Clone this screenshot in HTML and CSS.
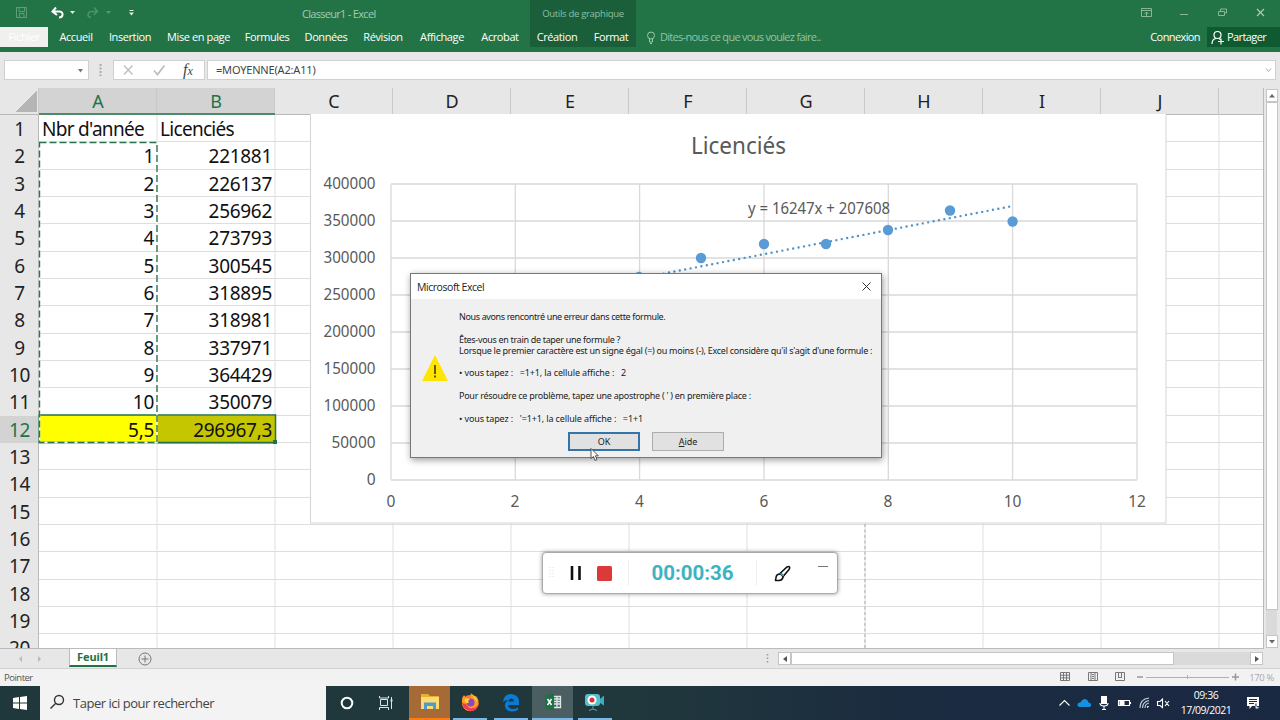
FILE: index.html
```html
<!DOCTYPE html>
<html lang="fr">
<head>
<meta charset="utf-8">
<title>Classeur1 - Excel</title>
<link rel="stylesheet" href="styles.css">
</head>
<body>
<div class="screen">
  <header class="ribbon">
    <div class="quick">
      <svg width="140" height="27" fill="none">
        <g stroke="#5f9c7a"><path d="M16.5 7.500h10v10h-10zM19 7.500v4h5.500v-4M19.500 17v-3.500h4.500v3.500"/></g>
        <path d="M56 7.500L52.500 11.500L57 15M53 11.500h6.500q3.500.5 3 3.500q-.5 2.500-3.500 2.500" stroke="#fff" stroke-width="2"/>
        <path d="M70 11h5l-2.500 3z" fill="#e2efe7"/>
        <g opacity=".35"><path d="M94 7.500l3.500 4-4 3.500M97.500 11.500H91q-3 .5-3 3.500 0 2 3 2.500" stroke="#9fc9af" stroke-width="1.600"/><path d="M106 11h5l-2.500 3z" fill="#c0d9ca"/></g>
        <path d="M129.500 10.500h4" stroke="#e2efe7"/><path d="M129 12.500h5l-2.500 3z" fill="#e2efe7"/>
      </svg>
    </div>
    <div class="doc-title">Classeur1 - Excel</div>
    <div class="context">
      <div class="context-title">Outils de graphique</div>
      <div class="context-tabs"><span>Création</span><span>Format</span></div>
    </div>
    <nav class="tabs">
      <span class="file">Fichier</span><span>Accueil</span><span>Insertion</span><span>Mise en page</span><span>Formules</span><span>Données</span><span>Révision</span><span>Affichage</span><span>Acrobat</span>
    </nav>
    <div class="tell">
      <svg width="10" height="13" fill="none" stroke="#9cc8ae"><circle cx="5" cy="4.500" r="3.500"/><path d="M3.500 7.500v3.500h3v-3.500M4 12.500h2"/></svg>
      <span>Dites-nous ce que vous voulez faire..</span>
    </div>
    <div class="window-buttons">
      <svg width="140" height="27" fill="none" stroke="#85b798">
        <path d="M.5 8.500h10v8h-10zM.5 10.500h10M5.500 16v-4M3.500 14l2-2 2 2"/>
        <path d="M39 14.500h8"/><path d="M77.500 11.500h6v4h-6zM79.500 11v-2h6v4h-2"/><path d="M116 9l7 7M123 9l-7 7" stroke="#a8cdb6" stroke-width="1.200"/>
      </svg>
    </div>
    <div class="account"><span class="login">Connexion</span>
      <span class="share"><svg width="14" height="15" fill="none" stroke="#fff" stroke-width="1.200"><circle cx="6.500" cy="5" r="3.500"/><path d="M1 14q0-5 4-5.500M8 8.500l1.500 1M7 11.500h6M10 8.500v6"/></svg><b>Partager</b></span>
    </div>
  </header>

  <section class="formula-bar">
    <div class="name-box"><svg width="6" height="4"><path d="M0 0h5l-2.500 3.500z" fill="#777"/></svg></div>
    <svg class="grip" width="3" height="12"><path d="M1.500 0v12" stroke="#aaa" stroke-width="2" stroke-dasharray="2 1.500"/></svg>
    <div class="fx-box">
      <svg width="90" height="18" fill="none" stroke="#bdbdbd" stroke-width="1.300"><path d="M10 4.500l8.500 9M18.500 4.500l-8.500 9"/><path d="M40 9.500l3.500 4 7-9" stroke-width="1.800"/></svg>
      <i class="fx">f<small>x</small></i>
    </div>
    <div class="formula"><span>=MOYENNE(A2:A11)</span><svg width="8" height="5" fill="none" stroke="#aaa"><path d="M1 .5l2.500 3 2.500-3"/></svg></div>
  </section>

  <main class="sheet">
    <div class="grid-area">
      <div class="col-heads">
        <span class="corner"></span><span class="sel">A</span><span class="sel">B</span><span>C</span><span>D</span><span>E</span><span>F</span><span>G</span><span>H</span><span>I</span><span>J</span><span></span>
      </div>
      <div class="rows">
        <div class="row"><b>1</b><span class="txt">Nbr d'année</span><span class="txt">Licenciés</span></div>
        <div class="row"><b>2</b><span>1</span><span>221881</span></div>
        <div class="row"><b>3</b><span>2</span><span>226137</span></div>
        <div class="row"><b>4</b><span>3</span><span>256962</span></div>
        <div class="row"><b>5</b><span>4</span><span>273793</span></div>
        <div class="row"><b>6</b><span>5</span><span>300545</span></div>
        <div class="row"><b>7</b><span>6</span><span>318895</span></div>
        <div class="row"><b>8</b><span>7</span><span>318981</span></div>
        <div class="row"><b>9</b><span>8</span><span>337971</span></div>
        <div class="row"><b>10</b><span>9</span><span>364429</span></div>
        <div class="row"><b>11</b><span>10</span><span>350079</span></div>
        <div class="row total"><b>12</b><span class="yellow">5,5</span><span class="olive">296967,3</span></div>
        <div class="row"><b>13</b></div>
        <div class="row"><b>14</b></div>
        <div class="row"><b>15</b></div>
        <div class="row"><b>16</b></div>
        <div class="row"><b>17</b></div>
        <div class="row"><b>18</b></div>
        <div class="row"><b>19</b></div>
        <div class="row"><b>20</b></div>
      </div>
      <svg class="marks" width="1263" height="561" fill="none">
        <path d="M39 26h236" stroke="#217346" stroke-width="1.600"/>
        <path d="M39 327h236.500v27.500H39z" stroke="#217346" stroke-width="1.500"/>
        <path d="M39.500 54.500H157V354.500H39.500z" stroke="#fff" stroke-width="1.500"/>
        <path d="M39.500 54.500H157V354.500H39.500z" stroke="#2b7550" stroke-width="1.400" stroke-dasharray="7 3"/>
        <path d="M273 352h4v4h-4z" fill="#217346"/>
        <path d="M865 436v125" stroke="#a9a9a9" stroke-dasharray="3 2.500"/>
      </svg>
      <svg class="chart" width="857" height="411" viewBox="310 114 857 411">
        <rect x="310.500" y="113.500" width="855.500" height="409.500" fill="#fff" stroke="#d4d4d4"/>
        <g stroke="#d9d9d9" stroke-width="1.300" fill="none">
          <path d="M391 184h746M391 221h746M391 258h746M391 295h746M391 332h746M391 369h746M391 406h746M391 443h746M391 480h746"/>
          <path d="M391 184v296M515.300 184v296M639.600 184v296M764 184v296M888.300 184v296M1012.600 184v296M1137 184v296"/>
        </g>
        <path d="M453 314.400L1012.600 206" stroke="#4f93c8" stroke-width="2.400" stroke-linecap="round" stroke-dasharray="0 5.500"/>
        <g fill="#5b9bd5"><circle cx="639" cy="277" r="5.200"/><circle cx="701" cy="258" r="5.200"/><circle cx="764" cy="244" r="5.200"/><circle cx="826" cy="244" r="5.200"/><circle cx="888" cy="230" r="5.200"/><circle cx="950" cy="210.500" r="5.200"/><circle cx="1012.600" cy="221.500" r="5.200"/></g>
        <g class="labels" fill="#595959">
          <text x="691" y="153.500" font-size="24" textLength="95" lengthAdjust="spacingAndGlyphs">Licenciés</text>
          <text x="748" y="214" textLength="142" lengthAdjust="spacingAndGlyphs">y = 16247x + 207608</text>
          <g text-anchor="end">
            <text x="375.500" y="189" textLength="52" lengthAdjust="spacingAndGlyphs">400000</text><text x="375.500" y="226" textLength="52" lengthAdjust="spacingAndGlyphs">350000</text><text x="375.500" y="263" textLength="52" lengthAdjust="spacingAndGlyphs">300000</text><text x="375.500" y="300" textLength="52" lengthAdjust="spacingAndGlyphs">250000</text><text x="375.500" y="337" textLength="52" lengthAdjust="spacingAndGlyphs">200000</text><text x="375.500" y="374" textLength="52" lengthAdjust="spacingAndGlyphs">150000</text><text x="375.500" y="411" textLength="52" lengthAdjust="spacingAndGlyphs">100000</text><text x="375.500" y="448" textLength="44" lengthAdjust="spacingAndGlyphs">50000</text><text x="375.500" y="485">0</text>
          </g>
          <g text-anchor="middle"><text x="391" y="507">0</text><text x="515" y="507">2</text><text x="639.500" y="507">4</text><text x="764" y="507">6</text><text x="888" y="507">8</text><text x="1012.500" y="507">10</text><text x="1137" y="507">12</text></g>
        </g>
      </svg>
    </div>
    <div class="vscroll"><span><svg width="6" height="4"><path d="M0 3.500h6L3 0z" fill="#666"/></svg></span><span class="vthumb"></span><i></i><span><svg width="6" height="4"><path d="M0 0h6L3 3.500z" fill="#666"/></svg></span></div>
  </main>

  <section class="sheet-tabs">
    <div class="arrows"><svg width="24" height="8" fill="#b9b9b9"><path d="M4 1v6L1 4zM20 1v6l3-3z"/></svg></div>
    <div class="sheet-tab">Feuil1</div>
    <svg class="add" width="14" height="14" fill="none" stroke="#777"><circle cx="7" cy="7" r="6"/><path d="M7 3.500v7M3.500 7h7"/></svg>
    <svg class="hgrip" width="3" height="10"><path d="M1.500 0v10" stroke="#999" stroke-width="1.500" stroke-dasharray="1.500 2"/></svg>
    <div class="hscroll"><span><svg width="4" height="6"><path d="M4 0v6L0 3z" fill="#555"/></svg></span><span class="hthumb"></span><i></i><span><svg width="4" height="6"><path d="M0 0v6l4-3z" fill="#555"/></svg></span></div>
  </section>

  <footer class="status">
    <span>Pointer</span>
    <svg width="180" height="16" fill="none" stroke="#777">
      <path d="M.5 3.500h9v8h-9zM3.500 3.500v8M6.500 3.500v8M.5 6.200h9M.5 8.900h9"/>
      <path d="M28.500 3.500h9v8h-9zM31 4v7M35 4v7M32 5.500h2M32 7.500h2M32 9.500h2"/>
      <path d="M55.500 3.500h9v8h-9zM58.500 4v4.500M61.500 4v4.500M58 8.500h4"/>
      <path d="M77 8h6M172 8h7M175.500 4.500v7" stroke="#999" stroke-width="1.500"/><path d="M86 8.500h83M127.500 6v4" stroke="#b0b0b0"/>
    </svg>
    <em>170 %</em>
  </footer>

  <footer class="taskbar">
    <div class="start"><svg width="16" height="16" fill="#fff"><path d="M1 3l6-.9v5.400H1zM8 2l7-1v6.500H8zM1 8.500h6v5.400L1 13zM8 8.500h7V15l-7-1z"/></svg></div>
    <div class="search"><svg width="16" height="16" fill="none" stroke="#333" stroke-width="1.400"><circle cx="10" cy="6" r="4.500"/><path d="M6.800 9.300L1.500 14.500"/></svg><span>Taper ici pour rechercher</span></div>
    <div class="app"><svg width="14" height="14" fill="none" stroke="#fff" stroke-width="2"><circle cx="7" cy="7" r="5.300"/></svg></div>
    <div class="app view"><svg width="16" height="14" fill="none" stroke="#dfe5e6"><path d="M2.500 3.500h7v6h-7zM1.500 0v2h9V0M1.500 14v-2.500h9V14M13.500 1v12" /><path d="M12.500 4.500h2" stroke-width="2"/></svg></div>
    <div class="app explorer"><svg width="20" height="18"><path d="M1 1h7l2 2h9v13H1z" fill="#e8b031"/><path d="M1 4h18v12H1z" fill="#ffda70"/><path d="M4 16V9.500h12V16h-3v-3H7v3z" fill="#4c9dcc"/></svg></div>
    <div class="app run"><svg width="20" height="20"><circle cx="10" cy="11" r="8" fill="#ff7139"/><path d="M2 9Q2 5 4 3l2 3h4l1-5q2 2 3 4l2-1q4 5 2 10-3 6-9 5-7-1-7-10z" fill="#ff9a1f"/><path d="M2 11q2 8 10 8 6-1 7-8-2 5-6 5-5 1-7-4z" fill="#f0385a"/><circle cx="10.500" cy="10.500" r="4" fill="#8d46c9"/><path d="M5 7q3-1 5 0l-2 2 1 2H6q-2-2-1-4zM12 2q5 3 5 8l-3-4z" fill="#ffd43c"/></svg></div>
    <div class="app run"><svg width="18" height="19"><path d="M1 9Q2 1 9.500 1 17 2 17 9v3H6q.5 4 5 4 3 0 5-1.500V17q-8 3.500-12-1Q1 11 6 7 3 7 1 9zM6.500 8.500H12Q12 5.500 9.500 5.500 7 5.500 6.500 8.500z" fill="#0a7cd8" fill-rule="evenodd"/></svg></div>
    <div class="app run active"><svg width="20" height="18"><path d="M10 3.500h7.500v11H10M10 6h7M10 8.500h7M10 11h7M14 4v10" fill="none" stroke="#dcebe2" stroke-width="1.300"/><path d="M2 2l9-1.500v17L2 16z" fill="#1e7145"/><path d="M4.500 6l4 6M8.500 6l-4 6" stroke="#fff" stroke-width="1.500"/></svg></div>
    <div class="app run camera"><svg width="22" height="20"><rect x="1" y="2" width="15" height="12" rx="3" fill="#55c0cb"/><path d="M16 7l4-3.500v10L16 11z" fill="#36b0bd"/><circle cx="8" cy="8" r="4.500" fill="#fff"/><circle cx="8" cy="8" r="2.500" fill="#d9312f"/><path d="M9 14v2.500M5 18.500q4-3 8 0" stroke="#56aeb7" fill="none"/></svg></div>
    <div class="tray">
      <svg width="115" height="18" fill="none" stroke="#fff" stroke-width="1.100">
        <path d="M1.500 11.500l5-5 5 5"/><path d="M21 13q-2-1-1.500-3 1-2 3-1.500Q24 5 27 5q3 .5 3.500 3.500 3 .5 2.500 3-.5 1.500-2 1.500z" fill="#1490df" stroke="none"/>
        <path d="M43 2h6v8h-6z" fill="#fff" stroke="none"/><path d="M42 9q0 3 4 3t4-3M46 12v3M44 15.500h4"/>
        <path d="M60.500 6.500h11v5h-11zM72.500 8v2"/><path d="M62 7.500h4v3h-4z" fill="#fff"/>
        <path d="M82 14q0-9 9-10M84.500 14q0-6 6.500-7.500M87 14q0-4 4-5M89.500 14v-1.500H91" stroke="#c8cfd8"/>
        <path d="M99.500 7.500h2.500l2.500-2.500v8.500L102 11.500h-2.500zM107 7l4 5M111 7l-4 5"/>
      </svg>
      <div class="clock"><span>09:36</span><span>17/09/2021</span></div>
      <svg class="note" width="15" height="15"><path d="M1 1h12v9H6l-2.500 3v-3H1z" fill="#fff"/><path d="M3 3.500h8M3 5.500h8M3 7.500h5" stroke="#1c2d42"/><path d="M10 7.500q0 4 3.500 3.500-1 2.500-3.500 2-2-1.500 0-5.500z" fill="#dfe3e8" stroke="#1c2d42" stroke-width=".6"/></svg>
    </div>
  </footer>

  <section class="dialog">
    <header><span>Microsoft Excel</span><svg width="9" height="9" stroke="#333"><path d="M.5.5l8 8M8.500.5l-8 8"/></svg></header>
    <div class="dialog-body">
      <svg class="warn" width="28" height="28"><path d="M14 1l13 26H1z" fill="#ffe500"/><path d="M14 11v9M14 21.500v2" stroke="#332d10" stroke-width="1.500"/></svg>
      <div class="message">
        <p class="m1">Nous avons rencontré une erreur dans cette formule.</p>
        <p class="m2">Êtes-vous en train de taper une formule ?</p>
        <p class="m3">Lorsque le premier caractère est un signe égal (=) ou moins (-), Excel considère qu'il s'agit d'une formule :</p>
        <p class="m4">• vous tapez :&nbsp;&nbsp; =1+1, la cellule affiche :&nbsp;&nbsp; 2</p>
        <p class="m5">Pour résoudre ce problème, tapez une apostrophe ( ' ) en première place :</p>
        <p class="m6">• vous tapez :&nbsp;&nbsp; '=1+1, la cellule affiche :&nbsp;&nbsp; =1+1</p>
      </div>
    </div>
    <div class="buttons"><button class="ok">OK</button><button><u>A</u>ide</button></div>
  </section>

  <section class="recorder">
    <svg class="dots" width="6" height="12"><path d="M1 0v12M4 0v12" stroke="#ddd" stroke-dasharray="1 2"/></svg>
    <svg class="pause" width="12" height="14"><path d="M2 0v14M9.500 0v14" stroke="#111" stroke-width="2.600"/></svg>
    <span class="stop"></span>
    <span class="timer">00:00:36</span>
    <svg class="brush" width="17" height="17" fill="none" stroke="#111" stroke-width="1.600"><path d="M6.500 8L13 2q2-1 2.500 0 .5 1-.5 2.500L9.500 11z"/><path d="M1 15.500q1-.5 1-3 .5-3.500 4-3.500 3 1 3 3.500-1 3-4 3z"/><path d="M6.500 8.500l3 2.500" stroke="#3bb5bf"/></svg>
    <span class="min"></span>
  </section>
  <svg class="cursor" width="9" height="14"><path d="M1 .5v10l2.500-2 1.500 4 2-1-1.700-3.700h3z" fill="#fff" stroke="#444" stroke-width=".9"/></svg>
</div>
</body>
</html>
```
FILE: styles.css
```css
* { box-sizing: border-box; }
body { margin: 0; font-family: "Noto Sans", "Open Sans", sans-serif; }
svg { display: block; flex: none; }
.screen { width: 1280px; height: 720px; position: relative; overflow: hidden; display: flex; flex-direction: column; background: #e7e7e7; white-space: nowrap; }

.ribbon { height: 52px; flex: none; background: #227447; color: #fff; display: grid; grid-template-columns: 140px 390px 106px 509px 135px; grid-template-rows: 27px 25px; font-family: "Open Sans", sans-serif; font-size: 11px; letter-spacing: -.4px; }
.quick { grid-area: 1 / 1; }
.doc-title { grid-area: 1 / 2; padding-left: 162px; line-height: 27px; color: #a4cbb4; letter-spacing: -.7px; }
.context { grid-area: 1 / 3 / 3 / 4; background: #1b5e3a; height: 47px; text-align: center; }
.context-title { height: 27px; line-height: 28px; font-size: 9.500px; letter-spacing: -.3px; color: #8fbfa2; }
.context-tabs { display: grid; grid-template-columns: 54px 54px; line-height: 20px; }
.tabs { grid-area: 2 / 1 / 3 / 3; display: grid; grid-template-columns: 48px 56px 52px 85px 52px 66px 48px 70px 46px; text-align: center; line-height: 20px; }
.file { background: #f0f1ef; height: 20px; color: #fff; }
.tell { grid-area: 2 / 4; display: flex; gap: 4px; padding: 4px 0 0 10px; color: #94c2a6; line-height: 12px; letter-spacing: -.7px; }
.window-buttons { grid-area: 1 / 5; margin-left: -4px; }
.account { grid-area: 2 / 4 / 3 / 6; justify-self: end; display: flex; height: 20px; line-height: 20px; }
.login { margin-right: 7px; letter-spacing: -.6px; }
.share { display: flex; width: 73px; background: #0f5a30; padding: 3px 0 0 4px; gap: 2px; line-height: 14px; letter-spacing: -.6px; }
.share b { font-weight: 400; }

.formula-bar { height: 36px; flex: none; display: flex; padding: 8px 4px 0; background: #e7e7e7; }
.name-box, .fx-box, .formula { height: 20px; background: #fff; border: 1px solid #cfcfcf; }
.name-box { width: 85px; padding: 8px 0 0 73px; }
.grip { margin: 4px 11px 0 10px; }
.fx-box { width: 92px; display: flex; }
.fx-box svg { width: 60px; }
.fx { font: italic 16px/17px "Liberation Serif", serif; color: #444; padding-left: 9px; }
.fx small { font-size: 12px; }
.formula { flex: 1; margin-left: 2px; padding: 0 2px 0 8px; font-size: 11px; line-height: 18px; color: #444; display: flex; justify-content: space-between; align-items: center; letter-spacing: -.18px; }

.sheet { height: 561px; flex: none; display: flex; }
.grid-area { width: 1264px; position: relative; overflow: hidden; border-right: 1px solid #bbb; border-bottom: 1px solid #bbb; }
.col-heads { height: 27px; display: grid; grid-template-columns: 39px repeat(10, 118px) 1fr; font-size: 18px; line-height: 27px; text-align: center; color: #222; border-bottom: 1px solid #b9b9b9; }
.col-heads span { border-right: 1px solid #c9c9c9; padding-left: 1px; }
.col-heads span:last-child { border: 0; }
.col-heads .sel { background: #d3d3d3; color: #217346; }
.corner { background: linear-gradient(135deg, transparent 50%, #b5b5b5 50%) 16px 3px / 21px 21px no-repeat; }
.rows { background: repeating-linear-gradient(90deg, transparent 0 117px, #dedede 117px 118px) 39.500px 0 #fff; }
.row { display: grid; grid-template-columns: 39px 118px 118px 1fr; height: 27.330px; border-bottom: 1px solid #dedede; font-size: 19px; line-height: 28px; color: #111; letter-spacing: -.3px; }
.row b { font-weight: 400; background: #e7e7e7; border-right: 1px solid #b9b9b9; box-shadow: 0 1px #c9c9c9; text-align: center; color: #222; padding-left: 1px; }
.row span { text-align: right; padding-right: 3px; }
.row .txt { text-align: left; padding: 0 0 0 3px; letter-spacing: -.7px; }
.total b { color: #217346; background: #d3d3d3; }
.total .yellow { background: #ff0; }
.total .olive { background: #c5c500; }
.marks { position: absolute; left: 0; top: 0; }
.chart { position: absolute; left: 310px; top: 26px; }
.labels { font-family: "Noto Sans", sans-serif; font-size: 15.500px; }
.vscroll { width: 16px; padding: 1px 3px 1px 2px; display: flex; flex-direction: column; background: #e7e7e7; }
.vscroll span, .hscroll span { background: #fff; border: 1px solid #c5c5c5; display: grid; place-items: center; }
.vscroll span { height: 13px; width: 12px; }
.vscroll .vthumb { height: 508px; }
.vscroll i { flex: 1; background: #dadada; }

.sheet-tabs { height: 20px; flex: none; display: flex; padding-right: 17px; border-bottom: 1px solid #d2d2d2; }
.arrows { width: 69px; padding: 6px 0 0 18px; }
.sheet-tab { width: 48px; height: 18px; background: #fff; border: solid #bbb; border-width: 0 1px; border-bottom: 2px solid #217346; color: #217346; font-weight: 700; font-size: 11px; line-height: 15px; letter-spacing: -.1px; text-align: center; }
.add { margin: 3px 0 0 21px; }
.hgrip { margin: 5px 9px 0 auto; }
.hscroll { width: 485px; height: 13px; margin-top: 3px; display: flex; }
.hscroll span { width: 13px; }
.hscroll .hthumb { width: 383px; }
.hscroll i { flex: 1; background: #dadada; }
.status { height: 17px; flex: none; background: #f2f2f2; display: flex; padding: 0 6px 0 4px; font-size: 9.500px; line-height: 17px; color: #555; font-family: "Open Sans", sans-serif; letter-spacing: -.35px; }
.status span { letter-spacing: -.5px; }
.status svg { margin-left: auto; }
.status em { font-style: normal; color: #aaa; margin-left: 9px; }

.taskbar { height: 34px; flex: none; display: flex; background: linear-gradient(90deg, #20373c 50%, #1b2b40 72%, #1a2942); }
.start { width: 40px; padding: 9px 12px; }
.search { width: 286px; background: #f3f3f3; display: flex; gap: 8px; padding: 8px 0 0 9px; font-size: 13px; line-height: 19px; color: #444; font-family: "Open Sans", sans-serif; letter-spacing: -.48px; }
.app { width: 41px; height: 34px; display: grid; place-items: center; }
.view { width: 42px; padding-right: 4px; }
.run { border-bottom: 2px solid #79b8e8; width: 34px; margin: 0 4px 0 3px; }
.explorer { background: #a56a35; border-bottom: 2px solid #ff7a10; }
.active { background: #4b5e62; width: 41px; margin: 0 4px 0 0; }
.camera { margin-left: 1px; }
.tray { margin-left: auto; display: flex; width: 222px; padding-right: 6px; color: #fff; align-items: center; font-family: "Open Sans", sans-serif; }
.clock { width: 62px; margin-left: 2px; display: flex; flex-direction: column; text-align: center; font-size: 10.500px; letter-spacing: -.5px; line-height: 15px; }
.note { margin-left: 9px; }

.dialog { position: absolute; left: 410px; top: 273px; width: 472px; height: 185px; background: #f0f0f0; border: 1px solid #777; box-shadow: 1px 2px 7px rgba(0,0,0,.4); color: #222; }
.dialog header { height: 25px; background: #fff; padding: 0 10px 0 6px; display: flex; align-items: center; justify-content: space-between; font-size: 10.500px; font-family: "Open Sans", sans-serif; letter-spacing: -.45px; }
.dialog-body { display: flex; height: 132px; }
.warn { margin: 55px 0 0 10px; }
.message { padding: 12px 0 0 10px; font-size: 9px; line-height: 11.300px; letter-spacing: -.1px; }
.message p { margin: 0 0 11.300px; }
.message .m1 { letter-spacing: -.37px; }
.message .m2 { margin: 0; letter-spacing: -.32px; }
.message .m3, .message .m5 { letter-spacing: -.26px; }
.message .m4, .message .m6 { letter-spacing: -.12px; }
.buttons { display: flex; gap: 12px; padding-left: 157px; margin-top: 1px; }
.buttons button { width: 72px; height: 19px; padding: 0; background: #e1e1e1; border: 1px solid #adadad; font: 9px/15px "Noto Sans", sans-serif; color: #222; }
.buttons .ok { border: 2px solid #3574a8; }

.recorder { position: absolute; left: 542px; top: 552px; width: 296px; height: 42px; background: #fff; border: 1px solid #aaa; border-radius: 4px; box-shadow: 0 0 4px rgba(0,0,0,.4); display: flex; align-items: center; }
.dots { margin-left: 6px; }
.pause { margin-left: 15px; }
.stop { width: 15px; height: 15px; background: #db3a39; border-radius: 1.500px; margin-left: 15px; }
.timer { width: 129px; height: 26px; margin-left: 16px; border: solid #eee; border-width: 0 1px; text-align: center; font: 700 20.500px/26px Roboto, sans-serif; color: #3eb3bf; }
.brush { margin-left: 17px; }
.min { width: 10px; height: 1px; background: #777; margin: -14px 0 0 27px; }
.cursor { position: absolute; left: 590px; top: 448px; }
```
